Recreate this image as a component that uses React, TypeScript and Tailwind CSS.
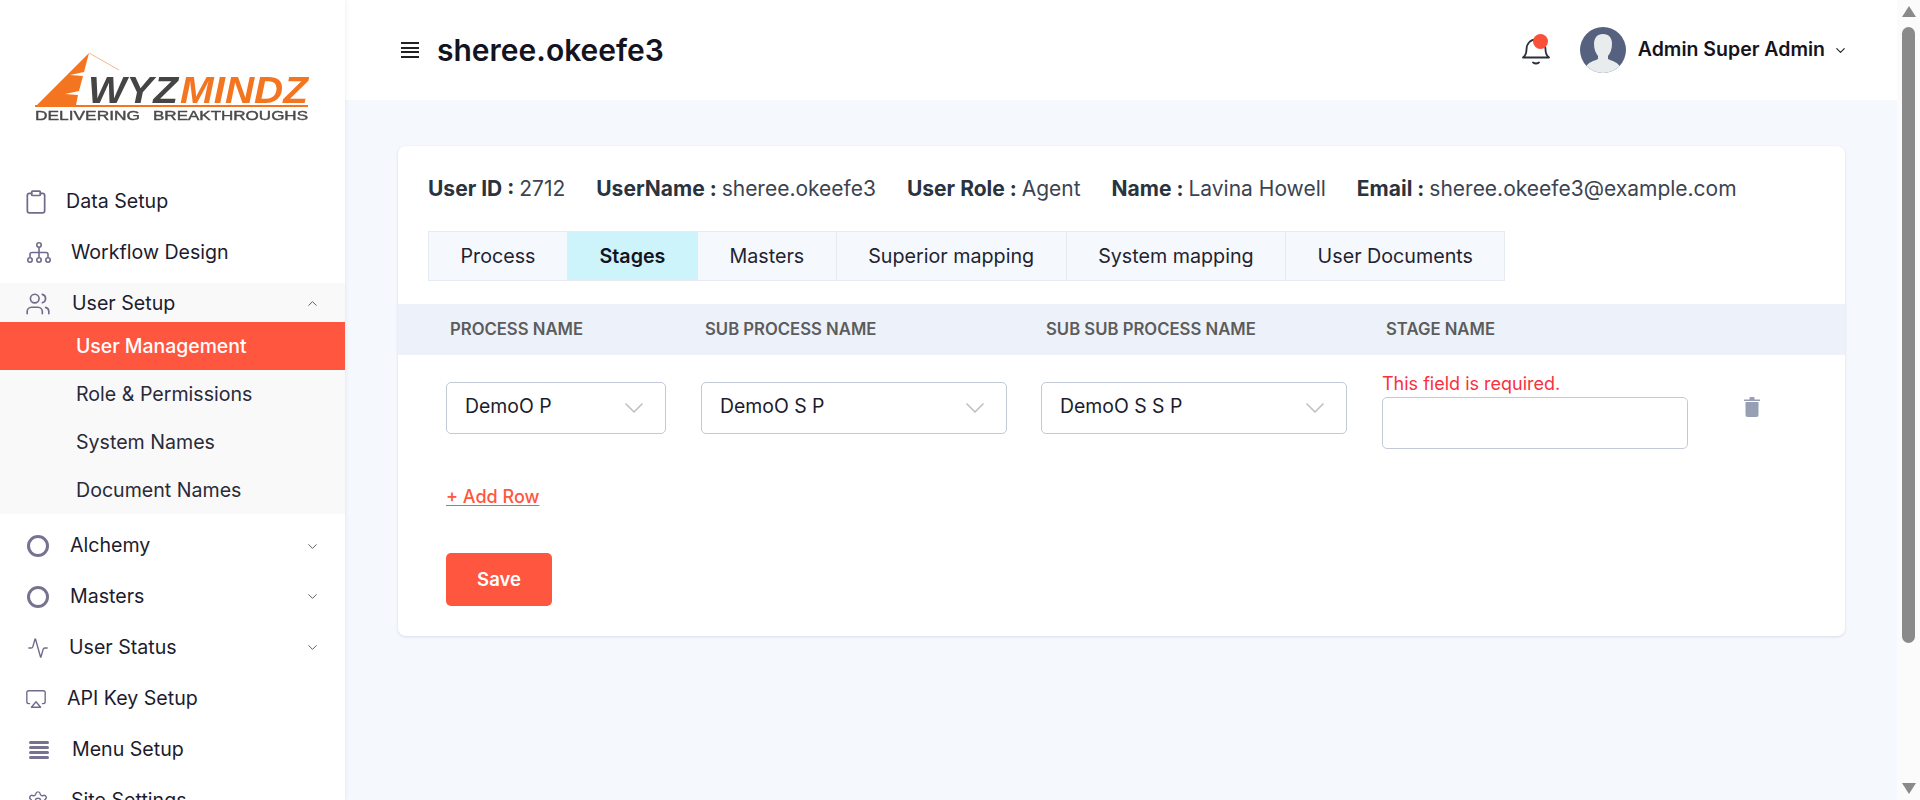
import type { ReactNode } from 'react';
import {
  Activity,
  Airplay,
  ChevronDown,
  ChevronUp,
  Clipboard,
  Settings,
  Users,
} from 'lucide-react';

const iconColor = '#6f6b8c';

function WorkflowIcon() {
  return (
    <svg width="24" height="22" viewBox="0 0 24 22" fill="none" stroke={iconColor} strokeWidth="1.6">
      <circle cx="12" cy="3" r="2.2" />
      <path d="M12 5.2V15M3 15v-2.5q0-2 2-2h14q2 0 2 2V15" />
      <circle cx="3" cy="18" r="2.2" />
      <circle cx="12" cy="18" r="2.2" />
      <circle cx="21" cy="18" r="2.2" />
    </svg>
  );
}

function MenuBars() {
  return (
    <div className="flex flex-col gap-[2px] w-[20px]">
      <div className="h-[3px] bg-[#77728f] rounded-sm" />
      <div className="h-[3px] bg-[#77728f] rounded-sm" />
      <div className="h-[3px] bg-[#77728f] rounded-sm" />
      <div className="h-[3px] bg-[#77728f] rounded-sm" />
    </div>
  );
}

function Ring() {
  return <div className="w-[22px] h-[22px] rounded-full border-[3px] border-[#77728f]" />;
}

function SideRow({
  icon,
  label,
  boxClass,
  chevron,
  rowClass = 'h-[51px]',
}: {
  icon: ReactNode;
  label: string;
  boxClass: string;
  chevron?: 'up' | 'down';
  rowClass?: string;
}) {
  return (
    <div className={`flex items-center pl-[27px] pr-[25px] shrink-0 ${rowClass}`}>
      <div className={`flex items-center shrink-0 ${boxClass}`}>{icon}</div>
      <span className="flex-1 text-[19.6px] text-[#1c1c2e]">{label}</span>
      {chevron === 'up' && <ChevronUp size={15} color="#555" strokeWidth={1.5} />}
      {chevron === 'down' && <ChevronDown size={15} color="#555" strokeWidth={1.5} />}
    </div>
  );
}

function Logo() {
  return (
    <svg width="276" height="70" viewBox="0 0 276 70" className="blur-[0.4px]">
      <path d="M0 54 L54 0 L49 19 L35 22 L48 23 L44 38 L30 41 L43 42 L41 52 Z" fill="#f47520" />
      <path d="M54 0 L84 17" stroke="#f6a26e" strokeWidth="0.8" fill="none" />
      <text x="53" y="50" fontFamily="Liberation Sans" fontWeight="700" fontStyle="italic" fontSize="36" fill="#454545" textLength="90" lengthAdjust="spacingAndGlyphs">WYZ</text>
      <text x="145" y="50" fontFamily="Liberation Sans" fontWeight="700" fontStyle="italic" fontSize="36" fill="#f47520" textLength="128" lengthAdjust="spacingAndGlyphs">MINDZ</text>
      <rect x="0" y="52" width="273" height="2" fill="#f47520" />
      <text x="0" y="66.500" fontFamily="Liberation Sans" fontSize="12.500" fill="#4a4a4a" stroke="#4a4a4a" strokeWidth="0.4" textLength="105" lengthAdjust="spacingAndGlyphs">DELIVERING</text>
      <text x="118" y="66.500" fontFamily="Liberation Sans" fontSize="12.500" fill="#4a4a4a" stroke="#4a4a4a" strokeWidth="0.4" textLength="155" lengthAdjust="spacingAndGlyphs">BREAKTHROUGHS</text>
    </svg>
  );
}

function Sidebar() {
  return (
    <aside className="w-[345px] h-[800px] overflow-hidden shrink-0 bg-white flex flex-col shadow-[1px_0_4px_rgba(60,70,110,0.08)] z-10">
      <div className="h-[176px] shrink-0 pl-[35px] pt-[53px]">
        <Logo />
      </div>
      <SideRow icon={<Clipboard size={26} color={iconColor} strokeWidth={1.6} className="-ml-[4px]" />} label="Data Setup" boxClass="w-[39px]" />
      <SideRow icon={<WorkflowIcon />} label="Workflow Design" boxClass="w-[44px]" />
      <div className="bg-[#f9f9fa] flex flex-col mt-[5px] shrink-0">
        <SideRow icon={<Users size={26} color={iconColor} strokeWidth={1.5} className="-ml-[2px]" />} label="User Setup" boxClass="w-[45px]" chevron="up" rowClass="h-[39px] pt-[2px]" />
        <div className="h-[48px] bg-[#ff5640] text-white text-[19.4px] font-medium pl-[76px] pt-[2px] flex items-center">User Management</div>
        <div className="h-[48px] text-[#2a2a38] text-[19.6px] pl-[76px] pt-[2px] flex items-center">Role &amp; Permissions</div>
        <div className="h-[48px] text-[#2a2a38] text-[19.6px] pl-[76px] pt-[2px] flex items-center">System Names</div>
        <div className="h-[48px] text-[#2a2a38] text-[19.6px] pl-[76px] pt-[2px] flex items-center">Document Names</div>
      </div>
      <SideRow icon={<Ring />} label="Alchemy" boxClass="w-[43px]" chevron="down" rowClass="h-[50px] mt-[7px]" />
      <SideRow icon={<Ring />} label="Masters" boxClass="w-[43px]" chevron="down" />
      <SideRow icon={<Activity size={22} color={iconColor} strokeWidth={1.5} />} label="User Status" boxClass="w-[42px]" chevron="down" />
      <SideRow icon={<Airplay size={22} color={iconColor} strokeWidth={1.5} className="-ml-[2px]" />} label="API Key Setup" boxClass="w-[40px]" />
      <SideRow icon={<MenuBars />} label="Menu Setup" boxClass="w-[45px] pl-[2px]" />
      <SideRow icon={<Settings size={22} color={iconColor} strokeWidth={1.5} />} label="Site Settings" boxClass="w-[44px]" />
    </aside>
  );
}

function TopBar() {
  return (
    <header className="h-[100px] shrink-0 bg-white flex items-center pl-[56px] pr-[49px]">
      <div className="flex flex-col gap-[2.5px] w-[18px]">
        <div className="h-[2px] bg-[#222]" />
        <div className="h-[2px] bg-[#222]" />
        <div className="h-[2px] bg-[#222]" />
        <div className="h-[2px] bg-[#222]" />
      </div>
      <h1 className="ml-[18px] text-[30px] font-semibold text-[#14141f] flex-1">sheree.okeefe3</h1>
      <div className="relative w-[28px] h-[30px] mr-[30px]">
        <svg width="28" height="30" viewBox="0 0 28 30" fill="none" stroke="#2b2f3a" strokeWidth="1.8" strokeLinecap="round" strokeLinejoin="round">
          <path d="M1 22.5c2-1.5 3.5-3 3.5-8 0-6 4-10 9.5-10s9.500 4 9.500 10c0 5 1.500 6.500 3.500 8Z" />
          <path d="M11 27.500c1.800 1.200 4.200 1.200 6 0" />
        </svg>
        <div className="absolute -top-[1px] left-[11px] w-[15px] h-[15px] rounded-full bg-[#f9503c]" />
      </div>
      <svg width="46" height="46" viewBox="0 0 46 46" className="shrink-0">
        <clipPath id="av"><circle cx="23" cy="23" r="23" /></clipPath>
        <g clipPath="url(#av)">
          <rect width="46" height="46" fill="#56617f" />
          <path d="M23 7c-6 0-9 4-9 10 0 5 1.500 9 4 12v3c-4 2-10 3-12 8v6h34v-6c-2-5-8-6-12-8v-3c2.500-3 4-7 4-12 0-6-3-10-9-10Z" fill="#e8ecec" />
        </g>
      </svg>
      <span className="ml-[12px] text-[19.5px] font-semibold text-[#14141f]">Admin Super Admin</span>
      <ChevronDown size={15} color="#222" strokeWidth={1.8} className="ml-[8px]" />
    </header>
  );
}

function Info({ label, value }: { label: string; value: string }) {
  return (
    <span className="text-[21px] leading-[30px] text-[#3b4452]">
      <b className="font-bold text-[#2a3340]">{label} : </b>
      {value}
    </span>
  );
}

function Tab({ label, active }: { label: string; active?: boolean }) {
  return (
    <div
      className={`h-full flex items-center px-[31.5px] pt-[2px] text-[19.7px] border-r border-[#e6eaf1] last:border-r-0 ${
        active ? 'bg-[#cdf3fb] font-semibold text-[#14141f]' : 'text-[#1f2430]'
      }`}
    >
      {label}
    </div>
  );
}

function Select({ value, widthClass }: { value: string; widthClass: string }) {
  return (
    <div className={`h-[52px] shrink-0 rounded-[5px] border border-[#c3cad6] flex items-center justify-between pl-[18px] pr-[15px] text-[19.4px] text-[#1c1c2e] ${widthClass}`}>
      <span className="pb-[2px]">{value}</span>
      <ChevronDown size={32} color="#c2c2c2" strokeWidth={1.3} />
    </div>
  );
}

function Card() {
  return (
    <section className="ml-[53px] mr-[52px] mt-[46px] h-[490px] bg-white rounded-lg shadow-[0_1px_3px_rgba(60,70,110,0.15)]">
      <div className="flex gap-[31px] px-[30px] pt-[28px] h-[85px]">
        <Info label="User ID" value="2712" />
        <Info label="UserName" value="sheree.okeefe3" />
        <Info label="User Role" value="Agent" />
        <Info label="Name" value="Lavina Howell" />
        <Info label="Email" value="sheree.okeefe3@example.com" />
      </div>
      <div className="ml-[30px] w-fit h-[50px] flex bg-[#f5f8fd] border border-[#e6eaf1]">
        <Tab label="Process" />
        <Tab label="Stages" active />
        <Tab label="Masters" />
        <Tab label="Superior mapping" />
        <Tab label="System mapping" />
        <Tab label="User Documents" />
      </div>
      <div className="mt-[23px] h-[51px] bg-[#edf1f9] flex items-center text-[16.700px] font-semibold uppercase text-[#5c5c5c]">
        <span className="ml-[52px] w-[255px]">Process Name</span>
        <span className="w-[341px]">Sub Process Name</span>
        <span className="w-[340px]">Sub Sub Process Name</span>
        <span>Stage Name</span>
      </div>
      <div className="flex pl-[48px] mt-[27px]">
        <Select value="DemoO P" widthClass="w-[220px]" />
        <div className="w-[35px]" />
        <Select value="DemoO S P" widthClass="w-[306px]" />
        <div className="w-[34px]" />
        <Select value="DemoO S S P" widthClass="w-[306px]" />
        <div className="w-[35px] shrink-0" />
        <div className="w-[306px] shrink-0 -mt-[11px]">
          <div className="text-[18px] leading-[26px] text-[#f9303e]">This field is required.</div>
          <input className="block w-full h-[52px] rounded-[5px] border border-[#c3cad6] outline-none" />
        </div>
        <svg width="16" height="20" viewBox="0 0 16 20" className="ml-[56px] mt-[15px]" fill="#979fb5">
          <path d="M0 2.500h5.500V1q0-1 1-1h3q1 0 1 1v1.500H16V4H0ZM1.500 5h13v13q0 2-2 2h-9q-2 0-2-2Z" />
        </svg>
      </div>
      <div className="ml-[48px] mt-[36px] text-[18px] leading-[24px] font-medium underline underline-offset-2 text-[#ff5640]">+ Add Row</div>
      <button className="block ml-[48px] mt-[44px] w-[106px] h-[53px] rounded-[5px] bg-[#ff5640] text-white text-[18.500px] font-semibold">Save</button>
    </section>
  );
}

function Scrollbar() {
  return (
    <div className="w-[23px] h-[800px] shrink-0 bg-[#fbfbfb] flex flex-col items-center">
      <div className="mt-[6px] w-0 h-0 border-x-[7.500px] border-x-transparent border-b-[11px] border-b-[#8a8a8a]" />
      <div className="mt-[10px] w-[13px] h-[616px] rounded-full bg-[#8a8a8a]" />
      <div className="mt-auto mb-[6px] w-0 h-0 border-x-[7.500px] border-x-transparent border-t-[11px] border-t-[#8a8a8a]" />
    </div>
  );
}

export default function App() {
  return (
    <div className="flex h-[800px] overflow-hidden font-['Inter',sans-serif]">
      <Sidebar />
      <main className="flex-1 min-w-0 h-[800px] bg-[#f5f8fd] flex flex-col">
        <TopBar />
        <Card />
      </main>
      <Scrollbar />
    </div>
  );
}
